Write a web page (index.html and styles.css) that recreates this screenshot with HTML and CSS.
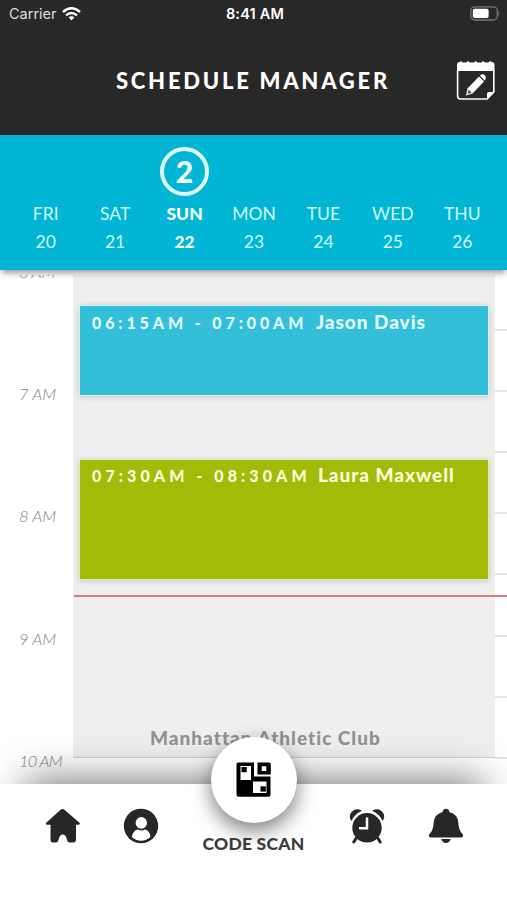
FILE: index.html
```html
<!DOCTYPE html>
<html lang="en">
<head>
    <meta charset="UTF-8">
    <meta name="viewport" content="width=device-width, initial-scale=1.0">
    <title>Schedule Manager</title>
    <link rel="stylesheet" href="styles.css">
</head>
<body>

    <header class="header">
        <div class="status-bar">
            <div class="carrier">
                <span>Carrier</span>
                <svg width="19" height="14" viewBox="0 0 19 14" fill="none" stroke="#fff" stroke-width="2.4">
                    <path d="M1 5 Q9.500 -2.500 18 5"/>
                    <path d="M4 8.300 Q9.500 3.500 15 8.300"/>
                    <path d="M6.600 10.300 Q9.500 8 12.400 10.300 L9.500 13.500 Z" fill="#fff" stroke="none"/>
                </svg>
            </div>
            <span class="clock">8:41 AM</span>
            <svg class="battery" width="31" height="15" viewBox="0 0 31 15">
                <rect x="0.800" y="0.800" width="26.500" height="13.200" rx="3.800" fill="none" stroke="#777" stroke-width="1.300"/>
                <rect x="2.800" y="2.800" width="15.800" height="9.200" rx="1.800" fill="#fff"/>
                <path d="M28.500 5 Q30.500 7.400 28.500 9.800 Z" fill="#777"/>
            </svg>
        </div>
        <div class="title-bar">
            <h1>SCHEDULE MANAGER</h1>
            <svg class="edit-icon" width="40" height="41" viewBox="0 0 40 41">
                <path d="M1 11 V5 Q1 2 4 2 L5 1 L6.500 2.500 H10 L12 1 L14 2.500 H18 L19.500 1 L21.500 2.500 H25.500 L27 1 L29 2.500 H32.500 L34 1 L35.500 2 Q38.500 2 38.500 5 V11 Z" fill="#fff"/>
                <path d="M1.600 10 V36 Q1.600 39 4.500 39 H31 L37.800 32 V10" fill="none" stroke="#fff" stroke-width="1.600"/>
                <path d="M31 39.800 V34 Q31 32 33 32 H38.500 Z" fill="#fff"/>
                <path d="M10 35.500 L11.500 28.500 L23 16.500 L28 21.500 L16.500 33.500 Z" fill="#fff"/>
                <path d="M24 15.700 L25.300 14.500 Q27 13.500 29 15.300 Q30.800 17.500 29.500 19.500 L28.700 20.500 Z" fill="#fff"/>
                <path d="M12.500 29.500 L15.800 32.500 L11.500 34 Z" fill="#555"/>
            </svg>
        </div>
    </header>

    <section class="week">
        <div class="day"><span>FRI</span><span>20</span></div>
        <div class="day"><span>SAT</span><span>21</span></div>
        <div class="day selected"><b class="count">2</b><span>SUN</span><span>22</span></div>
        <div class="day"><span>MON</span><span>23</span></div>
        <div class="day"><span>TUE</span><span>24</span></div>
        <div class="day"><span>WED</span><span>25</span></div>
        <div class="day"><span>THU</span><span>26</span></div>
    </section>

    <main class="timeline">
        <div class="hours">
            <div>6 AM</div>
            <div>7 AM</div>
            <div>8 AM</div>
            <div>9 AM</div>
            <div class="ten">10 AM</div>
        </div>
        <div class="events">
            <div class="event blue"><span class="time">06:15AM - 07:00AM</span><span class="name">Jason Davis</span></div>
            <div class="event green"><span class="time">07:30AM - 08:30AM</span><span class="name">Laura Maxwell</span></div>
            <div class="club">Manhattan Athletic Club</div>
        </div>
        <div class="ticks">
            <i></i><i></i><i></i><i></i><i></i><i></i><i></i><i></i>
        </div>
        <div class="now-line"></div>
    </main>

    <nav class="tab-bar">
        <a class="tab">
            <svg width="36" height="36" viewBox="0 0 36 36">
                <path d="M17.500 1 Q18.700 1 20 2.200 L34.500 14.800 Q35.500 16.500 34 16.800 H31 V31.500 Q31 34.500 28 34.500 H25 Q22.500 34.500 22 32 Q21 26.500 17.700 26.500 Q14.500 26.500 13.600 32 Q13 34.500 10.500 34.500 H8 Q5.500 34.500 5.500 31.500 V16.800 H2 Q0 16.500 1.200 14.800 L15 2.200 Q16.500 1 17.500 1 Z"/>
            </svg>
        </a>
        <a class="tab">
            <svg width="36" height="36" viewBox="0 0 36 36">
                <circle cx="18" cy="18" r="17.200"/>
                <ellipse cx="18.300" cy="14.800" rx="5.700" ry="5.900" fill="#fff"/>
                <path d="M8.800 29 Q10.500 21.500 15 21.500 Q18.300 23.500 22 21.500 Q26.500 22 27.500 29 Q23.500 32.700 18 32.700 Q12.500 32.700 8.800 29 Z" fill="#fff"/>
            </svg>
        </a>
        <a class="scan">
            <span class="scan-button">
                <svg width="36" height="36" viewBox="0 0 36 36">
                    <path d="M2 0.500 H18 V14.500 H34.500 V33 Q34.500 34.800 32.500 34.800 H2.500 Q0.500 34.800 0.500 32.500 V2.500 Q0.500 0.500 2 0.500 Z"/>
                    <path d="M21.500 0.500 H33 Q34.800 0.500 34.800 2.500 V12.500 H21.500 Z"/>
                    <path d="M4.500 4 H15 V18 H4.500 Z M25.700 4.200 H30.300 V9 H25.700 Z M17 19.500 H30.500 V31 H17 Z" fill="#fff"/>
                    <rect x="5.500" y="5" width="5.200" height="5.200"/>
                    <rect x="24.500" y="24.300" width="5.300" height="5.300"/>
                </svg>
            </span>
            <span class="scan-label">CODE SCAN</span>
        </a>
        <a class="tab">
            <svg width="36" height="36" viewBox="0 0 36 36">
                <path d="M2.500 13 Q-0.500 9 1.800 5 Q5.500 -0.500 12 2 L12.500 3 Q5.500 6 2.500 13 Z"/>
                <path d="M33.500 13 Q36.500 9 34.200 5 Q30.500 -0.500 24 2 L23.500 3 Q30.500 6 33.500 13 Z"/>
                <circle cx="18" cy="19.800" r="14.700"/>
                <path d="M7 30.500 L4.800 34 M29 30.500 L31.200 34" fill="none" stroke="#272727" stroke-width="3" stroke-linecap="round"/>
                <path d="M18 9.500 V20.300 H10" fill="none" stroke="#fff" stroke-width="2.500"/>
            </svg>
        </a>
        <a class="tab">
            <svg width="36" height="36" viewBox="0 0 36 36">
                <path d="M18 0.800 Q21 0.800 21.300 4 Q29.500 6 30.300 14.500 Q30.600 22.500 34.500 26 Q36.300 29.300 33 29.500 H3 Q-0.300 29.300 1.500 26 Q5.400 22.500 5.700 14.500 Q6.500 6 14.700 4 Q15 0.800 18 0.800 Z"/>
                <path d="M13.300 31 H22.700 Q21.500 35 18 35 Q14.500 35 13.300 31 Z"/>
            </svg>
        </a>
    </nav>

</body>
</html>
```

FILE: styles.css
```css
* {
    box-sizing: border-box;
}
body {
    margin: 0;
    width: 507px;
    height: 900px;
    overflow: hidden;
    display: flex;
    flex-direction: column;
    font-family: Lato, sans-serif;
    background-color: #fff;
}
svg {
    display: block;
}
.header {
    height: 135px;
    background-color: #282828;
    color: #fff;
}
.status-bar {
    height: 27px;
    padding: 0 6px 0 9px;
    display: grid;
    grid-template-columns: 1fr auto 1fr;
    align-items: center;
    font-family: Inter, sans-serif;
    font-size: 14.5px;
}
.carrier {
    display: flex;
    align-items: center;
    gap: 5px;
    color: #ddd;
}
.clock {
    font-weight: 600;
    font-size: 14.5px;
    letter-spacing: 0.2px;
}
.battery {
    justify-self: end;
}
.title-bar {
    height: 107px;
    padding: 0 11px 0 116px;
    display: flex;
    align-items: center;
    justify-content: space-between;
}
h1 {
    margin: 0;
    font-size: 22px;
    font-weight: 900;
    letter-spacing: 2.75px;
    white-space: nowrap;
}
.week {
    height: 135px;
    padding: 12px 10px 0 11px;
    display: grid;
    grid-template-columns: repeat(7, 1fr);
    background-color: #03b5d5;
    box-shadow: 0 5px 6px -2px rgba(0, 0, 0, 0.4);
    position: relative;
    z-index: 1;
}
.day {
    height: 109px;
    display: flex;
    flex-direction: column;
    align-items: center;
    justify-content: flex-end;
    font-size: 17.5px;
    line-height: 28px;
    color: #cdf7fc;
}
.selected {
    font-weight: 900;
    color: #f0feff;
}
.count {
    width: 49px;
    height: 49px;
    margin-bottom: 4px;
    border: 4px solid #dffbfd;
    border-radius: 50%;
    font-size: 30px;
    font-weight: 900;
    line-height: 41px;
    text-align: center;
}
.timeline {
    height: 514px;
    border-top: 5px solid #fff;
    display: grid;
    grid-template-columns: 73px 422px 12px;
    position: relative;
    overflow: hidden;
}
.hours {
    margin-top: -64px;
    padding-left: 19px;
    font-size: 16.5px;
    font-weight: 300;
    font-style: italic;
    color: #858585;
    white-space: nowrap;
}
.hours div {
    height: 122.2px;
    line-height: 122px;
}
.hours .ten {
    letter-spacing: -0.8px;
}
.events {
    height: 483px;
    padding: 30px 6px 0 6px;
    background-color: #efefef;
    border-bottom: 1px solid #d2d2d2;
}
.event {
    padding: 5px 0 0 12px;
    display: flex;
    align-items: baseline;
    line-height: 22px;
    border: 1px solid #d5f3f5;
    box-shadow: 0 1px 6px rgba(0, 0, 0, 0.17);
    white-space: nowrap;
}
.blue {
    height: 91px;
    background-color: #33bfda;
    color: #e4fcff;
}
.green {
    height: 121px;
    margin-top: 63px;
    padding-top: 4px;
    background-color: #a3ba09;
    border-color: #e2efa4;
    color: #fbffd9;
}
.time {
    width: 224px;
    font-size: 16px;
    font-weight: 900;
    letter-spacing: 3.9px;
}
.green .time {
    width: 226px;
    letter-spacing: 4.1px;
}
.name {
    font-size: 19px;
    font-weight: 900;
    letter-spacing: 0.95px;
}
.club {
    margin: 145px 0 0 71px;
    font-size: 19px;
    font-weight: 900;
    line-height: 26px;
    letter-spacing: 1px;
    color: #929292;
}
.ticks {
    margin-top: -5px;
}
.ticks i {
    display: block;
    height: 61.1px;
    border-bottom: 2px solid #e4e4e4;
}
.now-line {
    position: absolute;
    top: 320px;
    left: 74px;
    right: 0;
    height: 2px;
    background-color: #d87a80;
}
.tab-bar {
    height: 116px;
    padding: 0 22px;
    display: grid;
    grid-template-columns: 81px 76px 149px 77px 81px;
    background-color: #fff;
    box-shadow: 0 -28px 40px -25px rgba(0, 0, 0, 0.55);
    position: relative;
    z-index: 1;
}
.tab {
    padding-top: 24px;
    display: flex;
    justify-content: center;
    align-items: flex-start;
    fill: #272727;
}
.scan {
    margin-top: -47px;
    display: flex;
    flex-direction: column;
    align-items: center;
}
.scan-button {
    width: 86px;
    height: 86px;
    display: flex;
    align-items: center;
    justify-content: center;
    background-color: #fff;
    border-radius: 50%;
    box-shadow: 0 8px 20px rgba(0, 0, 0, 0.5);
}
.scan-label {
    margin-top: 9px;
    font-size: 17.5px;
    font-weight: 900;
    line-height: 24px;
    letter-spacing: 0.2px;
    color: #3c3c3c;
    white-space: nowrap;
}
```
